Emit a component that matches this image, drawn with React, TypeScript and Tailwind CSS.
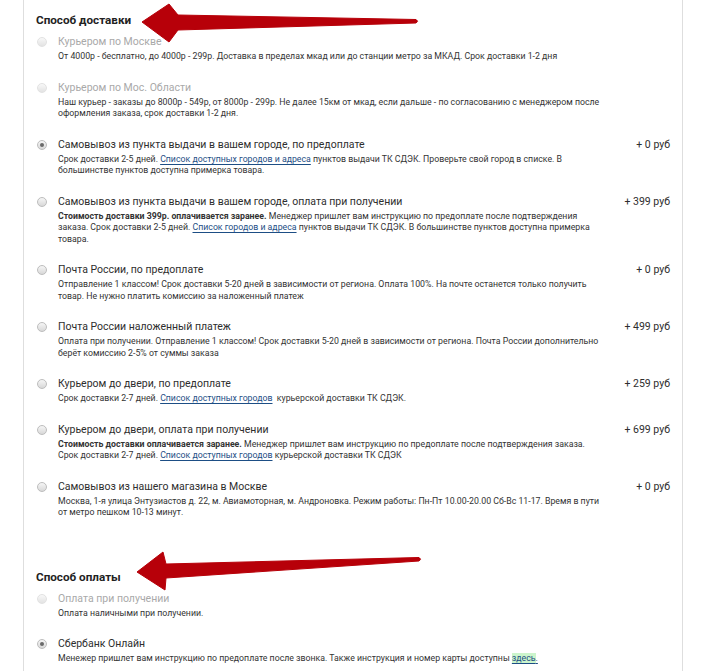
import React from "react";

type Option = {
  title: string;
  price?: string;
  disabled?: boolean;
  checked?: boolean;
  lines: React.ReactNode[];
};

const Lnk = ({ children }: { children: React.ReactNode }) => (
  <span className="text-[#1d4e85] underline underline-offset-[1.5px]">{children}</span>
);

const delivery: Option[] = [
  {
    title: "Курьером по Москве",
    disabled: true,
    lines: [
      "От 4000р - бесплатно, до 4000р - 299р. Доставка в пределах мкад или до станции метро за МКАД. Срок доставки 1-2 дня",
    ],
  },
  {
    title: "Курьером по Мос. Области",
    disabled: true,
    lines: [
      "Наш курьер - заказы до 8000р - 549р, от 8000р - 299р. Не далее 15км от мкад, если дальше - по согласованию с менеджером после",
      "оформления заказа, срок доставки 1-2 дня.",
    ],
  },
  {
    title: "Самовывоз из пункта выдачи в вашем городе, по предоплате",
    price: "+ 0 руб",
    checked: true,
    lines: [
      <>Срок доставки 2-5 дней. <Lnk>Список доступных городов и адреса</Lnk> пунктов выдачи ТК СДЭК. Проверьте свой город в списке. В</>,
      "большинстве пунктов доступна примерка товара.",
    ],
  },
  {
    title: "Самовывоз из пункта выдачи в вашем городе, оплата при получении",
    price: "+ 399 руб",
    lines: [
      <><b className="font-bold">Стоимость доставки 399р. оплачивается заранее.</b> Менеджер пришлет вам инструкцию по предоплате после подтверждения</>,
      <>заказа. Срок доставки 2-5 дней. <Lnk>Список городов и адреса</Lnk> пунктов выдачи ТК СДЭК. В большинстве пунктов доступна примерка</>,
      "товара.",
    ],
  },
  {
    title: "Почта России, по предоплате",
    price: "+ 0 руб",
    lines: [
      "Отправление 1 классом! Срок доставки 5-20 дней в зависимости от региона. Оплата 100%. На почте останется только получить",
      "товар. Не нужно платить комиссию за наложенный платеж",
    ],
  },
  {
    title: "Почта России наложенный платеж",
    price: "+ 499 руб",
    lines: [
      "Оплата при получении. Отправление 1 классом! Срок доставки 5-20 дней в зависимости от региона. Почта России дополнительно",
      "берёт комиссию 2-5% от суммы заказа",
    ],
  },
  {
    title: "Курьером до двери, по предоплате",
    price: "+ 259 руб",
    lines: [
      <>Срок доставки 2-7 дней. <Lnk>Список доступных городов</Lnk>&nbsp; курьерской доставки ТК СДЭК.</>,
    ],
  },
  {
    title: "Курьером до двери, оплата при получении",
    price: "+ 699 руб",
    lines: [
      <><b className="font-bold">Стоимость доставки оплачивается заранее.</b> Менеджер пришлет вам инструкцию по предоплате после подтверждения заказа.</>,
      <>Срок доставки 2-7 дней. <Lnk>Список доступных городов</Lnk> курьерской доставки ТК СДЭК</>,
    ],
  },
  {
    title: "Самовывоз из нашего магазина в Москве",
    price: "+ 0 руб",
    lines: [
      "Москва, 1-я улица Энтузиастов д. 22, м. Авиамоторная, м. Андроновка. Режим работы: Пн-Пт 10.00-20.00 Сб-Вс 11-17. Время в пути",
      "от метро пешком 10-13 минут.",
    ],
  },
];

const payment: Option[] = [
  {
    title: "Оплата при получении",
    disabled: true,
    lines: ["Оплата наличными при получении."],
  },
  {
    title: "Сбербанк Онлайн",
    checked: true,
    lines: [
      <>Менежер пришлет вам инструкцию по предоплате после звонка. Также инструкция и номер карты доступны <span className="bg-[#ccf5cc]"><Lnk>здесь</Lnk></span><Lnk>.</Lnk></>,
    ],
  },
];

function Radio({ checked, disabled }: { checked?: boolean; disabled?: boolean }) {
  return (
    <span
      className={
        "mt-[1px] flex h-[10px] w-[10px] shrink-0 items-center justify-center rounded-full border bg-gradient-to-b from-[#f6f6f6] to-[#d8d8d8] " +
        (disabled ? "border-[#d6d6d6] opacity-70" : "border-[#bdbdbd]")
      }
    >
      {checked && <span className="h-[4px] w-[4px] rounded-full bg-[#6a6a6a]" />}
    </span>
  );
}

function Row({ o }: { o: Option }) {
  return (
    <div className="flex pb-[17px]">
      <div className="flex w-[22px] shrink-0 pt-[2px] pl-[1px]">
        <Radio checked={o.checked} disabled={o.disabled} />
      </div>
      <div className="flex-1">
        <div className="flex h-[15px] items-center justify-between text-[10.5px] leading-[15px]">
          <span className={o.disabled ? "text-[#a9a9a9]" : "text-[#2e2e2e]"}>{o.title}</span>
          {o.price && <span className="text-[#2e2e2e]">{o.price}</span>}
        </div>
        <div className="mt-[2px] whitespace-nowrap text-[8.75px] leading-[11.5px] text-[#333]">
          {o.lines.map((l, i) => (
            <div key={i}>{l}</div>
          ))}
        </div>
      </div>
    </div>
  );
}

export default function App() {
  return (
    <div className="relative min-h-[671px] bg-white font-['Roboto',sans-serif]">
      <div className="ml-[23px] min-h-[671px] w-[660px] border-x border-[#dedede] pl-[12px] pr-[12px] pt-[12px]">
        <h2 className="h-[16px] text-[11.7px] font-bold leading-[16px] text-[#222]">Способ доставки</h2>
        <div className="mt-[6px]">
          {delivery.map((o, i) => (
            <Row key={i} o={o} />
          ))}
        </div>
        <h2 className="mt-[33px] h-[16px] text-[11.7px] font-bold leading-[16px] text-[#222]">Способ оплаты</h2>
        <div className="mt-[6px]">
          {payment.map((o, i) => (
            <Row key={i} o={o} />
          ))}
        </div>
      </div>

      <svg className="pointer-events-none absolute left-0 top-0" width="714" height="671" viewBox="0 0 714 671">
        <path
          d="M142 22 L169 4 L178 15 L416 19.5 Q419 21 416 23 L178 30 L169 42 Z"
          fill="#b70009"
          stroke="#b70009"
          strokeWidth="1"
          strokeLinejoin="round"
        />
        <path
          d="M137 572 L163 552 L166 564 L419 557.5 Q422 559 419 561 L166 578 L165 590 Z"
          fill="#b70009"
          stroke="#b70009"
          strokeWidth="1"
          strokeLinejoin="round"
        />
      </svg>
    </div>
  );
}
